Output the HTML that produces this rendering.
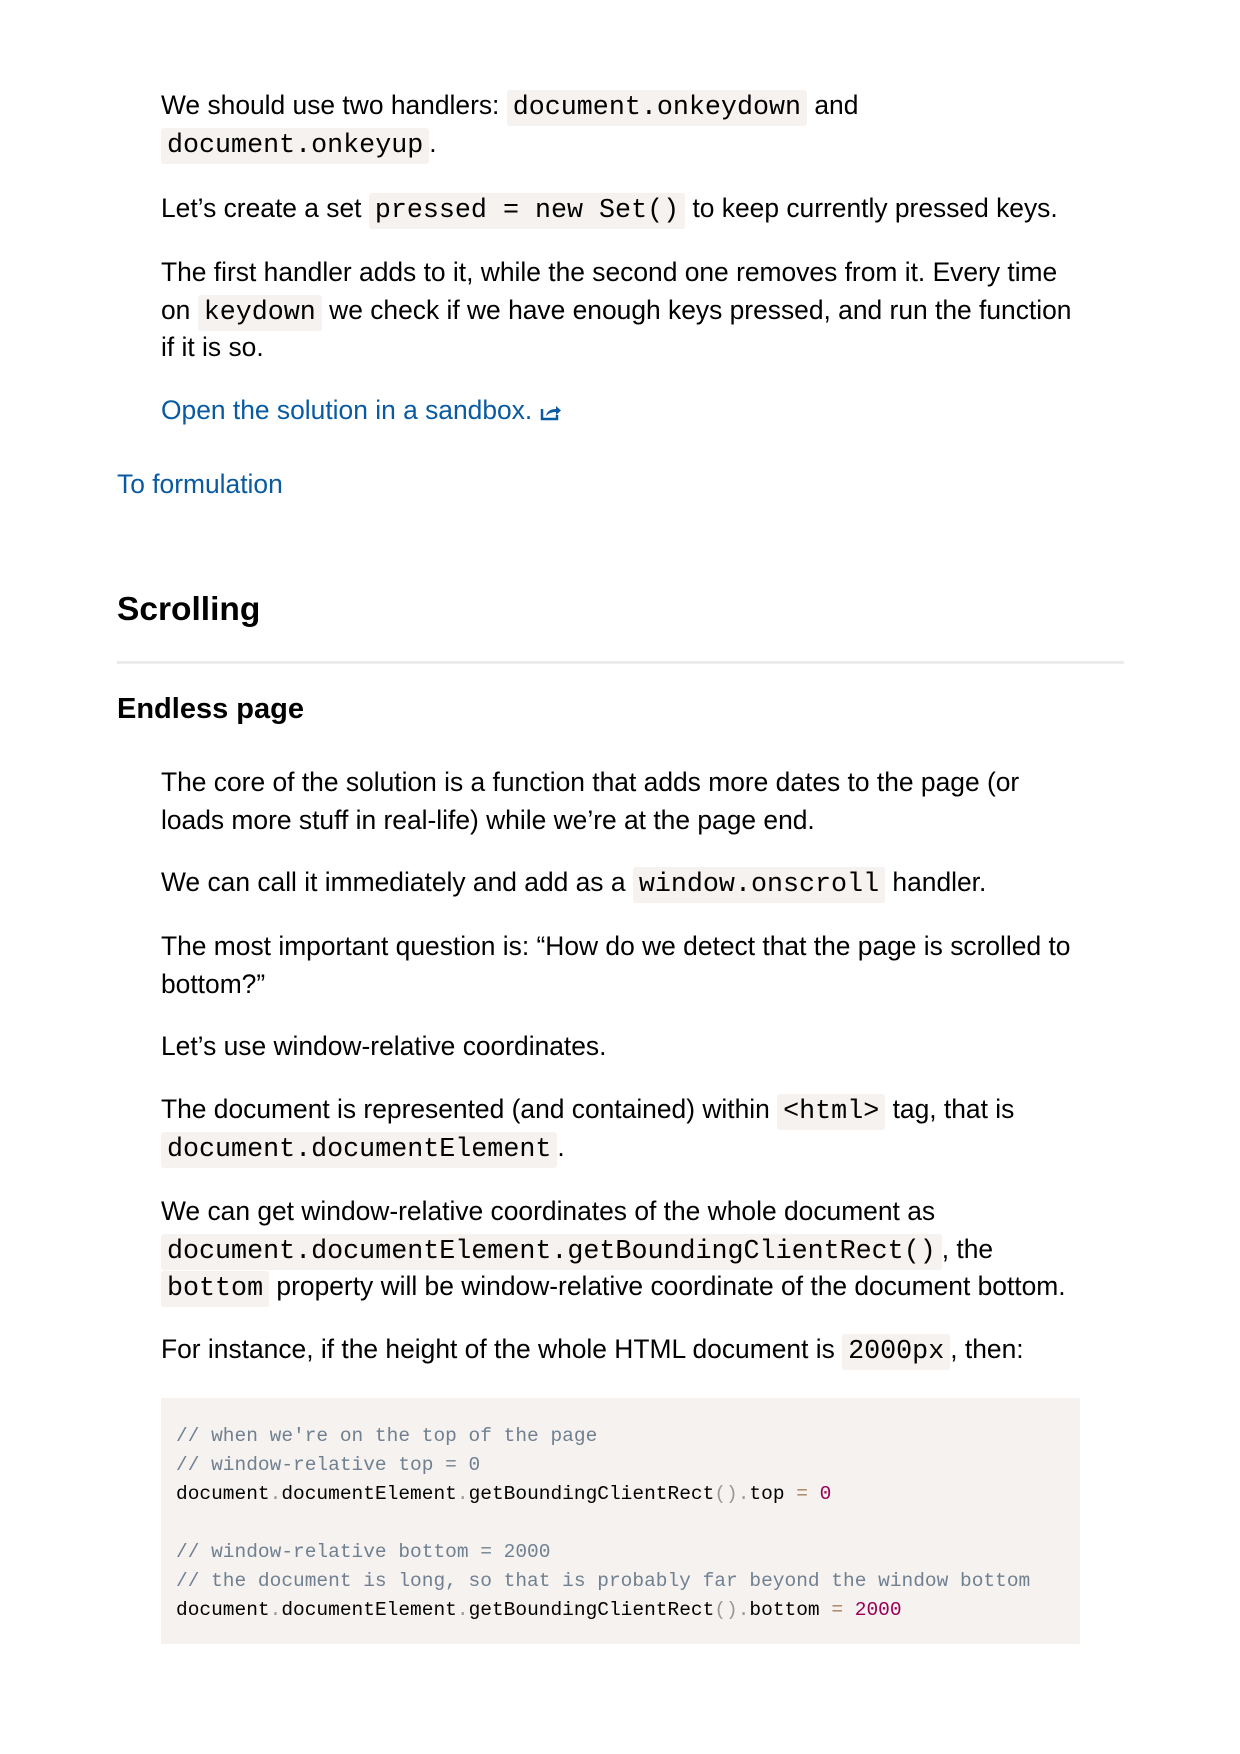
<!DOCTYPE html>
<html><head><meta charset="utf-8"><style>
body{margin:0;width:1240px;height:1754px;background:#fff;position:relative;font-family:"Liberation Sans",sans-serif;color:#000;}
.p{position:absolute;left:161px;width:920px;font-size:26.4px;line-height:37.5px;}
code{font-family:"Liberation Mono",monospace;font-size:26.7px;line-height:1;background:#f5f2f0;padding:3px 6px;border-radius:3px;}
a{color:#0a5aa2;text-decoration:none;}
h2{position:absolute;left:117px;margin:0;font-size:33.5px;line-height:40px;font-weight:bold;}
h3{position:absolute;left:117px;margin:0;font-size:29px;line-height:34px;font-weight:bold;}
.hr{position:absolute;left:117px;width:1007px;top:661px;height:3px;background:#ebebeb;}
pre{position:absolute;left:161px;top:1398px;width:919px;height:246px;margin:0;background:#f5f2f0;box-sizing:border-box;padding:24px 0 0 15px;font-family:"Liberation Mono",monospace;font-size:19.5px;line-height:29px;color:#000;}
.c{color:#708090}.o{color:#a67f59}.n{color:#905}.g{color:#999}
</style></head><body>
<div class="p" style="top:87px">We should use two handlers: <code>document.onkeydown</code> and<br><code>document.onkeyup</code>.</div>
<div class="p" style="top:190px">Let’s create a set <code>pressed = new Set()</code> to keep currently pressed keys.</div>
<div class="p" style="top:254px">The first handler adds to it, while the second one removes from it. Every time on <code>keydown</code> we check if we have enough keys pressed, and run the function if it is so.</div>
<div class="p" style="top:392px"><a>Open the solution in a sandbox. <svg width="22" height="18" viewBox="0 0 22 18" style="vertical-align:-2px"><path d="M2 6v10h15v-4" fill="none" stroke="#0a5aa2" stroke-width="2.5"/><path d="M6 13c1-5 5-7 10-7V3l5 4.5-5 4.5V9c-4 0-7 1-10 4z" fill="#0a5aa2"/></svg></a></div>
<div class="p" style="top:466px;left:117px"><a>To formulation</a></div>
<h2 style="top:590px">Scrolling</h2>
<div class="hr"></div>
<h3 style="top:692px">Endless page</h3>
<div class="p" style="top:764px">The core of the solution is a function that adds more dates to the page (or loads more stuff in real-life) while we’re at the page end.</div>
<div class="p" style="top:864px">We can call it immediately and add as a <code>window.onscroll</code> handler.</div>
<div class="p" style="top:928px">The most important question is: “How do we detect that the page is scrolled to bottom?”</div>
<div class="p" style="top:1028px">Let’s use window-relative coordinates.</div>
<div class="p" style="top:1091px">The document is represented (and contained) within <code>&lt;html&gt;</code> tag, that is<br><code>document.documentElement</code>.</div>
<div class="p" style="top:1193px">We can get window-relative coordinates of the whole document as<br><code>document.documentElement.getBoundingClientRect()</code>, the<br><code>bottom</code> property will be window-relative coordinate of the document bottom.</div>
<div class="p" style="top:1331px">For instance, if the height of the whole HTML document is <code>2000px</code>, then:</div>
<pre><span class="c">// when we're on the top of the page</span>
<span class="c">// window-relative top = 0</span>
document<span class="g">.</span>documentElement<span class="g">.</span>getBoundingClientRect<span class="g">().</span>top <span class="o">=</span> <span class="n">0</span>

<span class="c">// window-relative bottom = 2000</span>
<span class="c">// the document is long, so that is probably far beyond the window bottom</span>
document<span class="g">.</span>documentElement<span class="g">.</span>getBoundingClientRect<span class="g">().</span>bottom <span class="o">=</span> <span class="n">2000</span></pre>
</body></html>
